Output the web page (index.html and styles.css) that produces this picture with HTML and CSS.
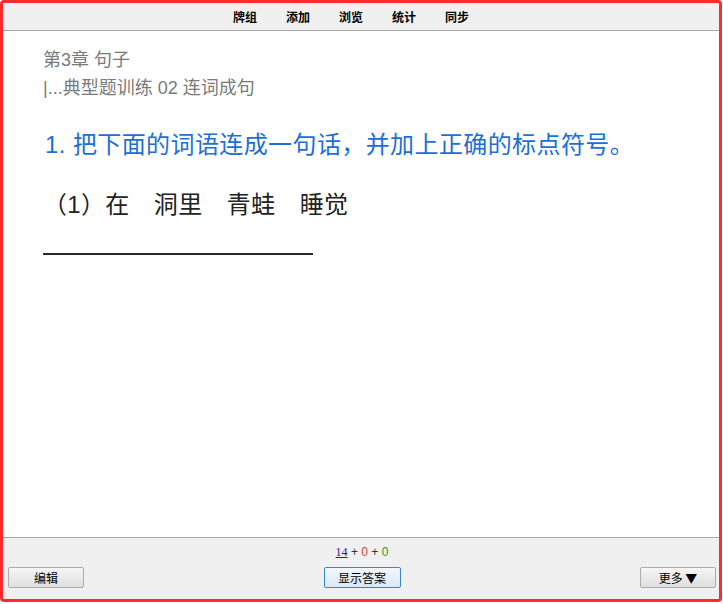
FILE: index.html
```html
<!DOCTYPE html>
<html>
<head>
    <meta charset="utf-8">
    <title>卡片复习</title>
    <link rel="stylesheet" href="styles.css">
</head>
<body>
    <div class="frame">
        <div class="topbar">
            <a href="#" class="nav-item">牌组</a>
            <a href="#" class="nav-item">添加</a>
            <a href="#" class="nav-item">浏览</a>
            <a href="#" class="nav-item">统计</a>
            <a href="#" class="nav-item">同步</a>
        </div>

        <div class="card">
            <div class="crumb">第3章 句子</div>
            <div class="crumb">|...典型题训练 02 连词成句</div>
            <div class="question">1. 把下面的词语连成一句话，并加上正确的标点符号。</div>
            <div class="words">（1）在　洞里　青蛙　睡觉</div>
            <div class="blank"></div>
        </div>

        <div class="bottombar">
            <div class="counts">
                <a href="#" class="count-new">14</a>
                <span class="plus">+</span>
                <span class="count-learn">0</span>
                <span class="plus">+</span>
                <span class="count-due">0</span>
            </div>
            <div class="buttons">
                <button class="btn">编辑</button>
                <button class="btn btn-focus">显示答案</button>
                <button class="btn">更多 ▼</button>
            </div>
        </div>
    </div>
</body>
</html>
```

FILE: styles.css
```css
* {
    margin: 0;
    padding: 0;
    box-sizing: border-box;
}

body {
    background-color: #ffffff;
    font-family: "Liberation Sans", "Noto Sans CJK SC", sans-serif;
}

.frame {
    width: 722px;
    height: 602px;
    border: 3px solid #ff2a2a;
    border-radius: 4px;
    display: flex;
    flex-direction: column;
    overflow: hidden;
}

.topbar {
    height: 28px;
    background-color: #f0f0f0;
    border-bottom: 1px solid #a8a8a8;
    display: flex;
    justify-content: center;
    align-items: center;
    gap: 29px;
    padding-right: 20px;
}

.nav-item {
    font-family: "Noto Sans CJK SC", sans-serif;
    font-size: 12px;
    font-weight: bold;
    color: #000000;
    text-decoration: none;
}

.card {
    flex: 1;
    background-color: #ffffff;
    padding: 15px 40px 0 40px;
}

.crumb {
    font-size: 18px;
    line-height: 28px;
    color: #7a7a7a;
}

.question {
    margin-top: 25px;
    padding-left: 2px;
    font-size: 24px;
    line-height: 36px;
    letter-spacing: 0.4px;
    color: #1d6fd6;
}

.words {
    margin-top: 24px;
    font-size: 24px;
    line-height: 36px;
    letter-spacing: 0.3px;
    color: #222222;
}

.blank {
    margin-top: 30px;
    width: 270px;
    border-bottom: 2px solid #2a2a2a;
}

.bottombar {
    height: 62px;
    background-color: #f0f0f0;
    border-top: 1px solid #a8a8a8;
    padding: 6px 3px 0 5px;
}

.counts {
    text-align: center;
    font-size: 12px;
    line-height: 16px;
}

.count-new {
    font-family: "Liberation Serif", serif;
    color: #1a1aa6;
}

.plus {
    color: #333333;
}

.count-learn {
    color: #d2452a;
}

.count-due {
    color: #2a9a1a;
}

.buttons {
    margin-top: 7px;
    display: flex;
    justify-content: space-between;
}

.btn {
    width: 76px;
    height: 21px;
    font-family: "Noto Sans CJK SC", sans-serif;
    font-size: 12px;
    color: #000000;
    background: linear-gradient(#f6f6f6, #dedede);
    border: 1px solid #acacac;
    border-radius: 2px;
}

.btn-focus {
    width: 77px;
    border-color: #3b86c8;
    background: linear-gradient(#f2f8fd, #dbe9f6);
}
```
